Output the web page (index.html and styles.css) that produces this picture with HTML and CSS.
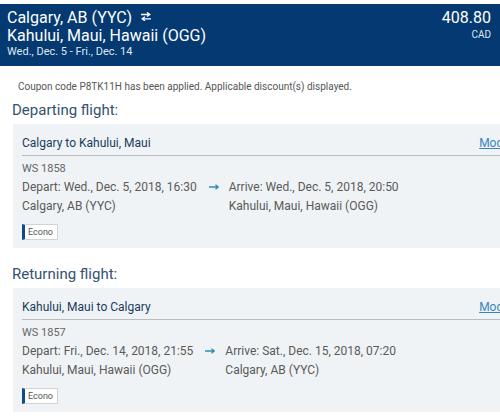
FILE: index.html
```html
<!DOCTYPE html>
<html lang="en">
<head>
    <meta charset="UTF-8">
    <meta name="viewport" content="width=device-width, initial-scale=1.0">
    <title>Trip summary</title>
    <link rel="stylesheet" href="styles.css">
</head>
<body>
    <div class="trip-header">
        <div class="trip-route">
            <div class="route-line">Calgary, AB (YYC)
                <svg class="swap" width="10" height="9" viewBox="0 0 10 9">
                    <path d="M0 2.5h8.5M6 0.4L8.8 2.5L6 4.6" fill="none" stroke="#fff" stroke-width="1.3"/>
                    <path d="M10 6.8H1.5M4 4.7L1.2 6.8L4 8.9" fill="none" stroke="#fff" stroke-width="1.3"/>
                </svg>
            </div>
            <div class="route-line">Kahului, Maui, Hawaii (OGG)</div>
            <div class="route-dates">Wed., Dec. 5 - Fri., Dec. 14</div>
        </div>
        <div class="trip-price">
            <div class="price-amount">408.80</div>
            <div class="price-currency">CAD</div>
        </div>
    </div>

    <div class="content">
        <p class="coupon">Coupon code P8TK11H has been applied. Applicable discount(s) displayed.</p>

        <h2 class="section-title">Departing flight:</h2>
        <div class="flight-card">
            <div class="flight-head">
                <span class="flight-name">Calgary to Kahului, Maui</span>
                <a class="modify" href="#">Modify</a>
            </div>
            <div class="flight-no">WS 1858</div>
            <div class="leg">
                <div class="leg-col">
                    <div>Depart: Wed., Dec. 5, 2018, 16:30</div>
                    <div>Calgary, AB (YYC)</div>
                </div>
                <svg class="leg-arrow" width="10" height="6" viewBox="0 0 10 6">
                    <path d="M0 3h8.5M6.5 0.8L9.3 3L6.5 5.2" fill="none" stroke="#2f8fb4" stroke-width="1.4"/>
                </svg>
                <div class="leg-col">
                    <div>Arrive: Wed., Dec. 5, 2018, 20:50</div>
                    <div>Kahului, Maui, Hawaii (OGG)</div>
                </div>
            </div>
            <span class="fare">Econo</span>
        </div>

        <h2 class="section-title second">Returning flight:</h2>
        <div class="flight-card">
            <div class="flight-head">
                <span class="flight-name">Kahului, Maui to Calgary</span>
                <a class="modify" href="#">Modify</a>
            </div>
            <div class="flight-no">WS 1857</div>
            <div class="leg">
                <div class="leg-col">
                    <div>Depart: Fri., Dec. 14, 2018, 21:55</div>
                    <div>Kahului, Maui, Hawaii (OGG)</div>
                </div>
                <svg class="leg-arrow" width="10" height="6" viewBox="0 0 10 6">
                    <path d="M0 3h8.5M6.5 0.8L9.3 3L6.5 5.2" fill="none" stroke="#2f8fb4" stroke-width="1.4"/>
                </svg>
                <div class="leg-col">
                    <div>Arrive: Sat., Dec. 15, 2018, 07:20</div>
                    <div>Calgary, AB (YYC)</div>
                </div>
            </div>
            <span class="fare">Econo</span>
        </div>
    </div>
</body>
</html>
```

FILE: styles.css
```css
html, body{
    margin: 0;
    padding: 0;
    overflow: hidden;
}
body{
    font-family: Roboto, "Liberation Sans", sans-serif;
    color: #555;
    background: #fff;
}
.trip-header{
    display: flex;
    justify-content: space-between;
    margin-top: 4px;
    height: 62px;
    box-sizing: border-box;
    padding: 5px 9px 0 7px;
    background: #043a71;
    color: #fff;
}
.route-line{
    font-size: 16px;
    line-height: 18px;
}
.swap{
    margin-left: 5px;
    vertical-align: 2px;
}
.route-dates{
    font-size: 11px;
    line-height: 13px;
    color: #dfe7f0;
}
.trip-price{
    text-align: right;
}
.price-amount{
    font-size: 16px;
    line-height: 18px;
}
.price-currency{
    font-size: 10px;
    line-height: 14px;
    margin-top: 1px;
    color: #dfe7f0;
}
.content{
    width: 518px;
    padding-left: 12px;
}
.coupon{
    margin: 14px 0 0;
    padding-left: 6px;
    font-size: 10px;
    line-height: 14px;
    color: #555;
}
.section-title{
    margin: 6px 0 4px;
    font-size: 15px;
    font-weight: normal;
    line-height: 20px;
    color: #34526f;
}
.section-title.second{
    margin-top: 16px;
}
.flight-card{
    margin-left: 1px;
    padding: 0 14px 8px 9px;
    background: #eff3f5;
}
.flight-head{
    display: flex;
    justify-content: space-between;
    align-items: baseline;
    padding: 10px 0 3px;
    border-bottom: 1px solid #b8bdc2;
}
.flight-name{
    font-size: 12px;
    line-height: 18px;
    color: #1b3b5e;
}
.modify{
    font-size: 12px;
    color: #3a84bd;
}
.flight-no{
    padding-top: 6px;
    font-size: 11px;
    line-height: 14px;
    color: #666;
}
.leg{
    display: flex;
    align-items: flex-start;
    margin-top: 2px;
    font-size: 12px;
    line-height: 19px;
    color: #5a5a5a;
}
.leg-arrow{
    flex: none;
    margin: 6px 10px 0 12px;
}
.fare{
    display: inline-block;
    margin-top: 8px;
    padding: 0 4px 0 3px;
    height: 16px;
    box-sizing: border-box;
    font-size: 9px;
    line-height: 14px;
    color: #555;
    background: #fff;
    border: 1px solid #cfd4d8;
    border-left: 3px solid #0d4c8c;
}
```
